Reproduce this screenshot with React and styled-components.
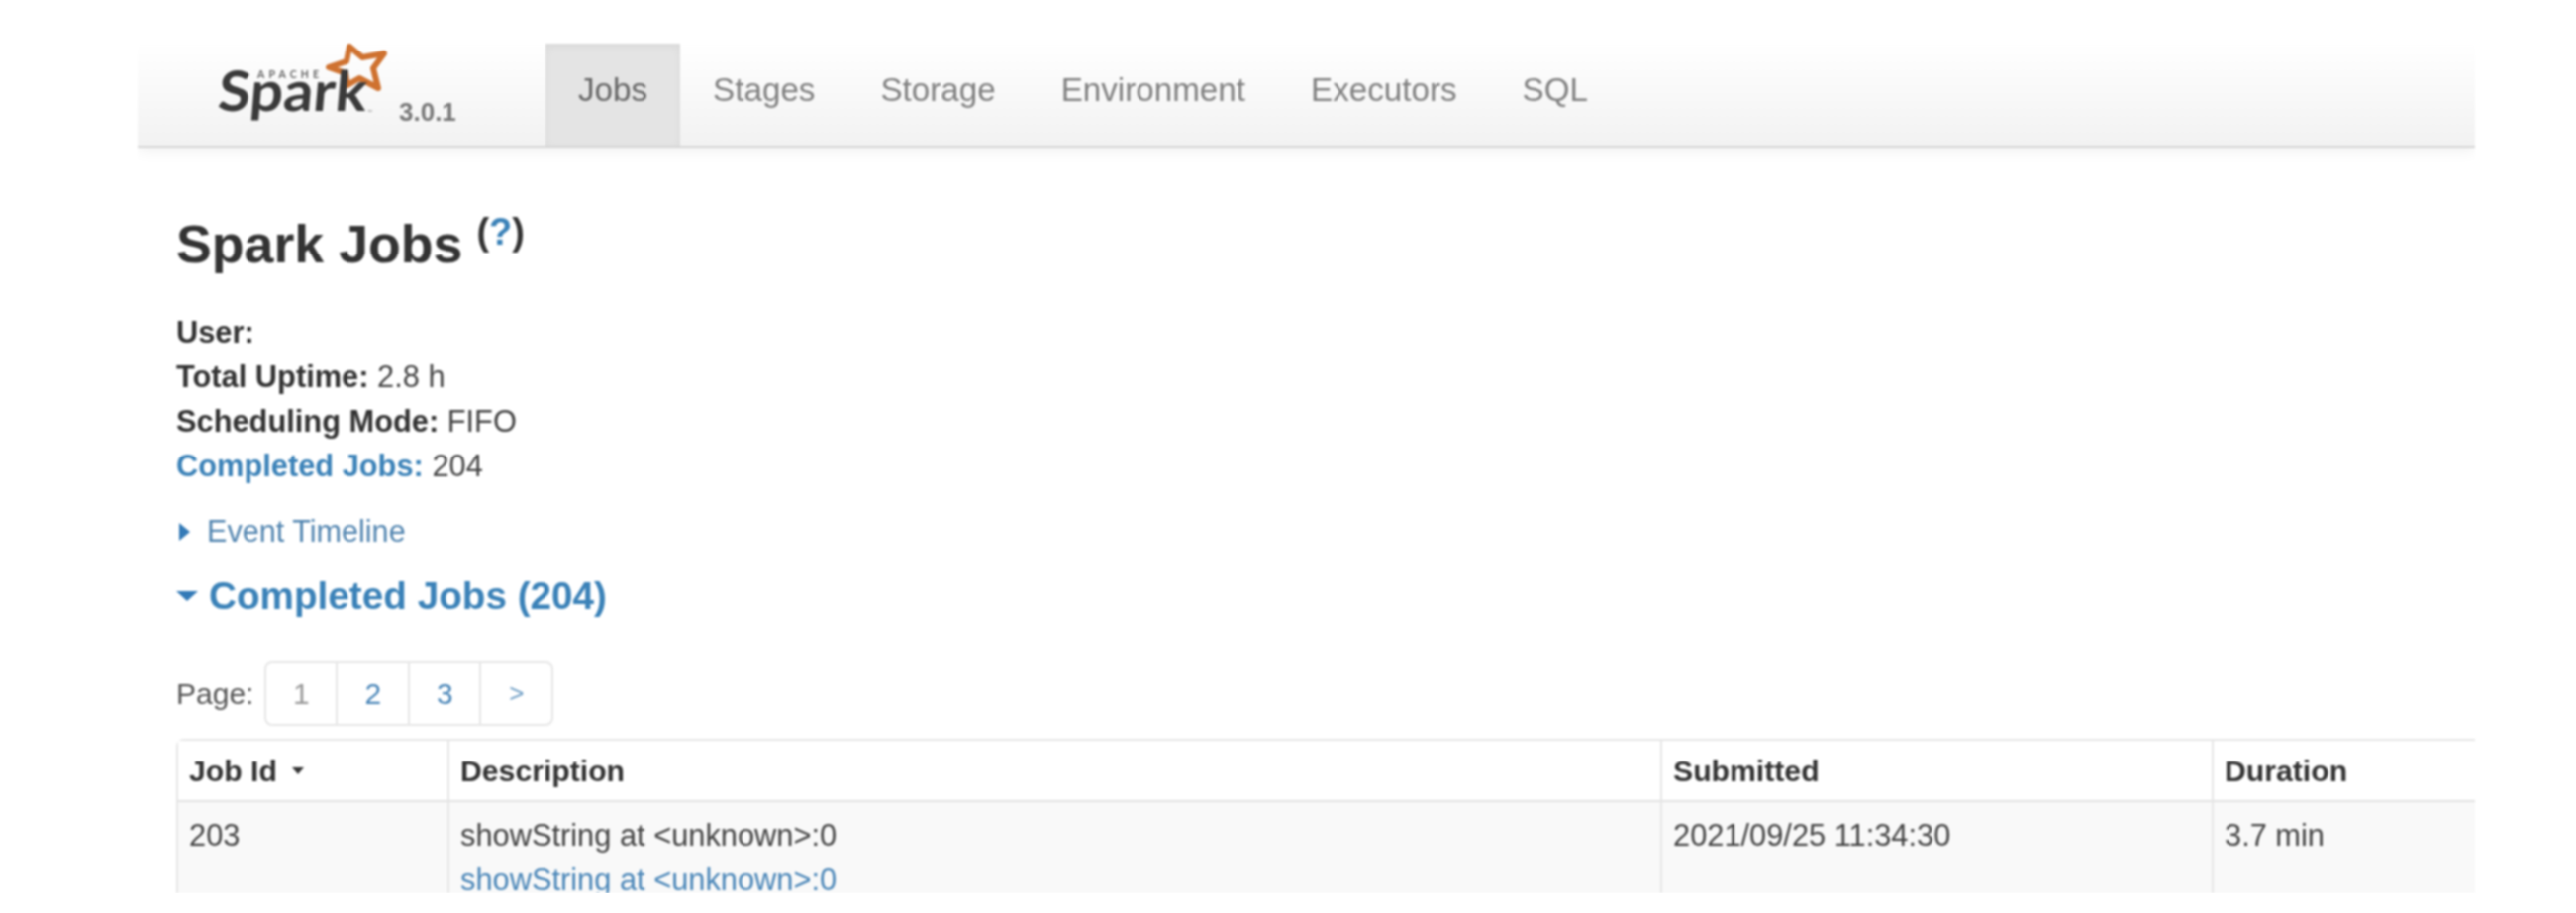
import styled, { createGlobalStyle } from "styled-components";

const GlobalStyle = createGlobalStyle`
 html, body {
  margin: 0;
  background: #fff;
  font-family: "Liberation Sans", Arial, sans-serif;
  color: #444;
 }
`;

const Frame = styled.div`
 width: 2361px;
 height: 858px;
 margin: 44px 0 0 139px;
 overflow: hidden;
 filter: blur(0.8px);
`;

const NavBar = styled.div`
 display: flex;
 height: 103px;
 background: linear-gradient(to bottom, #fff, #f2f2f2);
 border-bottom: 2px solid #d6d6d6;
 box-shadow: 0 4px 14px rgba(0, 0, 0, 0.06);
`;

const Brand = styled.div`
 display: flex;
 width: 412px;
 padding-left: 76px;
 box-sizing: border-box;
`;

const Version = styled.span`
 font-size: 26px;
 font-weight: bold;
 color: #777;
 margin: 54px 0 0 -2px;
`;

const NavItem = styled.a`
 padding: 0 33px;
 font-size: 33.2px;
 line-height: 94px;
 color: ${(props) => (props.$active ? "#666" : "#808080")};
 background: ${(props) => (props.$active ? "#e4e4e4" : "transparent")};
 box-shadow: ${(props) => (props.$active ? "inset 0 3px 9px rgba(0, 0, 0, 0.05)" : "none")};
`;

const Content = styled.div`
 padding-left: 39px;
`;

const Title = styled.h1`
 margin: 67px 0 37px;
 font-size: 53.7px;
 line-height: 60px;
 font-weight: bold;
 color: #333;
`;

const Help = styled.sup`
 position: relative;
 margin-left: 14px;
 font-size: 38px;
 line-height: 0;
 vertical-align: 18px;
 font-weight: bold;
`;

const HelpLink = styled.span`
 color: #3b82b8;
`;

const SummaryList = styled.ul`
 margin: 0 0 21px;
 padding: 0;
 list-style: none;
 font-size: 30.8px;
 line-height: 45px;
`;

const Label = styled.strong`
 color: ${(props) => (props.$link ? "#3b82b8" : "#333")};
`;

const TimelineToggle = styled.div`
 display: flex;
 align-items: center;
 height: 45px;
 font-size: 30.6px;
 color: #5285b0;
`;

const ArrowRight = styled.span`
 width: 0;
 height: 0;
 margin: 0 17px 0 3px;
 border-top: 9px solid transparent;
 border-bottom: 9px solid transparent;
 border-left: 11px solid #337ab7;
`;

const JobsToggle = styled.h4`
 display: flex;
 align-items: center;
 margin: 18px 0 41px;
 height: 50px;
 font-size: 38.7px;
 font-weight: bold;
 color: #3b82b8;
`;

const ArrowDown = styled.span`
 width: 0;
 height: 0;
 margin-right: ${(props) => props.$gap}px;
 border-left: ${(props) => props.$size}px solid transparent;
 border-right: ${(props) => props.$size}px solid transparent;
 border-top: ${(props) => props.$height}px solid ${(props) => props.$color};
`;

const PageRow = styled.div`
 display: flex;
 align-items: center;
 gap: 11px;
 font-size: 30px;
 color: #555;
`;

const Pagination = styled.div`
 display: flex;
 height: 65px;
 box-sizing: border-box;
 border: 2px solid #e6e6e6;
 border-radius: 8px;
`;

const PageCell = styled.span`
 display: flex;
 align-items: center;
 justify-content: center;
 width: ${(props) => props.$width}px;
 border-left: ${(props) => (props.$first ? "none" : "2px solid #e6e6e6")};
 box-sizing: border-box;
 font-size: ${(props) => (props.$small ? 26 : 30)}px;
 color: ${(props) => (props.$muted ? "#999" : props.$small ? "#6c9cc4" : "#4a86b8")};
`;

const JobsTable = styled.table`
 width: 2356px;
 margin-top: 13px;
 table-layout: fixed;
 border-collapse: separate;
 border-spacing: 0;
 font-size: 30.8px;
 line-height: 45px;
 border-top: 2px solid #e6e6e6;
 border-left: 2px solid #e6e6e6;
 border-top-left-radius: 8px;
`;

const HeadCell = styled.th`
 height: 62px;
 padding: 0 11px;
 box-sizing: border-box;
 text-align: left;
 font-size: 30.2px;
 font-weight: bold;
 color: #333;
 background: #fff;
 border-bottom: 2px solid #e2e2e2;
 border-left: ${(props) => (props.$first ? "none" : "2px solid #e6e6e6")};
`;

const HeadInner = styled.span`
 display: flex;
 align-items: center;
 gap: 15px;
`;

const BodyCell = styled.td`
 height: 110px;
 padding: 11px;
 box-sizing: border-box;
 vertical-align: top;
 background: #f9f9f9;
 border-left: ${(props) => (props.$first ? "none" : "2px solid #e6e6e6")};
`;

const JobLink = styled.div`
 color: #4a86b8;
`;

// star + wordmark, drawn on the navbar's own pixel grid
const SparkLogo = () => (
 <svg width="190" height="103" viewBox="0 0 190 103">
  <polygon
   points="138,3 151,14 173,10 162,25 167,45 148,35 136,42 134,30 117,24 135,18"
   fill="none"
   stroke="#cf7230"
   strokeWidth="6"
   strokeLinejoin="round"
  />
  <text x="45" y="35" fontFamily="Lato, sans-serif" fontSize="10.5" fontWeight="700" fill="#666" textLength="62">
   APACHE
  </text>
  <text
   x="4"
   y="68"
   fontFamily="Lato, sans-serif"
   fontSize="56"
   fontWeight="700"
   fill="#3a3a3a"
   textLength="150"
   lengthAdjust="spacingAndGlyphs"
   transform="skewX(-5) translate(6 0)"
  >
   Spark
  </text>
  <text x="156" y="72" fontFamily="Lato, sans-serif" fontSize="7" fill="#888">
   ™
  </text>
 </svg>
);

const navItems = ["Jobs", "Stages", "Storage", "Environment", "Executors", "SQL"];

const App = () => {
 return (
  <>
   <GlobalStyle />
   <Frame>
    <NavBar>
     <Brand>
      <SparkLogo />
      <Version>3.0.1</Version>
     </Brand>
     {navItems.map((item, index) => (
      <NavItem key={item} $active={index === 0}>
       {item}
      </NavItem>
     ))}
    </NavBar>

    <Content>
     <Title>
      Spark Jobs
      <Help>
       (<HelpLink>?</HelpLink>)
      </Help>
     </Title>

     <SummaryList>
      <li>
       <Label>User:</Label>
      </li>
      <li>
       <Label>Total Uptime:</Label> 2.8 h
      </li>
      <li>
       <Label>Scheduling Mode:</Label> FIFO
      </li>
      <li>
       <Label $link>Completed Jobs:</Label> 204
      </li>
     </SummaryList>

     <TimelineToggle>
      <ArrowRight />
      Event Timeline
     </TimelineToggle>

     <JobsToggle>
      <ArrowDown $size={11} $height={10} $color="#337ab7" $gap={11} />
      Completed Jobs (204)
     </JobsToggle>

     <PageRow>
      Page:
      <Pagination>
       <PageCell $first $muted $width={70}>1</PageCell>
       <PageCell $width={73}>2</PageCell>
       <PageCell $width={72}>3</PageCell>
       <PageCell $small $width={73}>&gt;</PageCell>
      </Pagination>
     </PageRow>

     <JobsTable>
      <colgroup>
       <col style={{ width: "272px" }} />
       <col style={{ width: "1225px" }} />
       <col style={{ width: "557px" }} />
       <col style={{ width: "302px" }} />
      </colgroup>
      <thead>
       <tr>
        <HeadCell $first>
         <HeadInner>
          Job Id
          <ArrowDown $size={6} $height={7} $color="#333" $gap={0} />
         </HeadInner>
        </HeadCell>
        <HeadCell>Description</HeadCell>
        <HeadCell>Submitted</HeadCell>
        <HeadCell>Duration</HeadCell>
       </tr>
      </thead>
      <tbody>
       <tr>
        <BodyCell $first>203</BodyCell>
        <BodyCell>
         showString at &lt;unknown&gt;:0
         <JobLink>showString at &lt;unknown&gt;:0</JobLink>
        </BodyCell>
        <BodyCell>2021/09/25 11:34:30</BodyCell>
        <BodyCell>3.7 min</BodyCell>
       </tr>
      </tbody>
     </JobsTable>
    </Content>
   </Frame>
  </>
 );
};

export default App;
